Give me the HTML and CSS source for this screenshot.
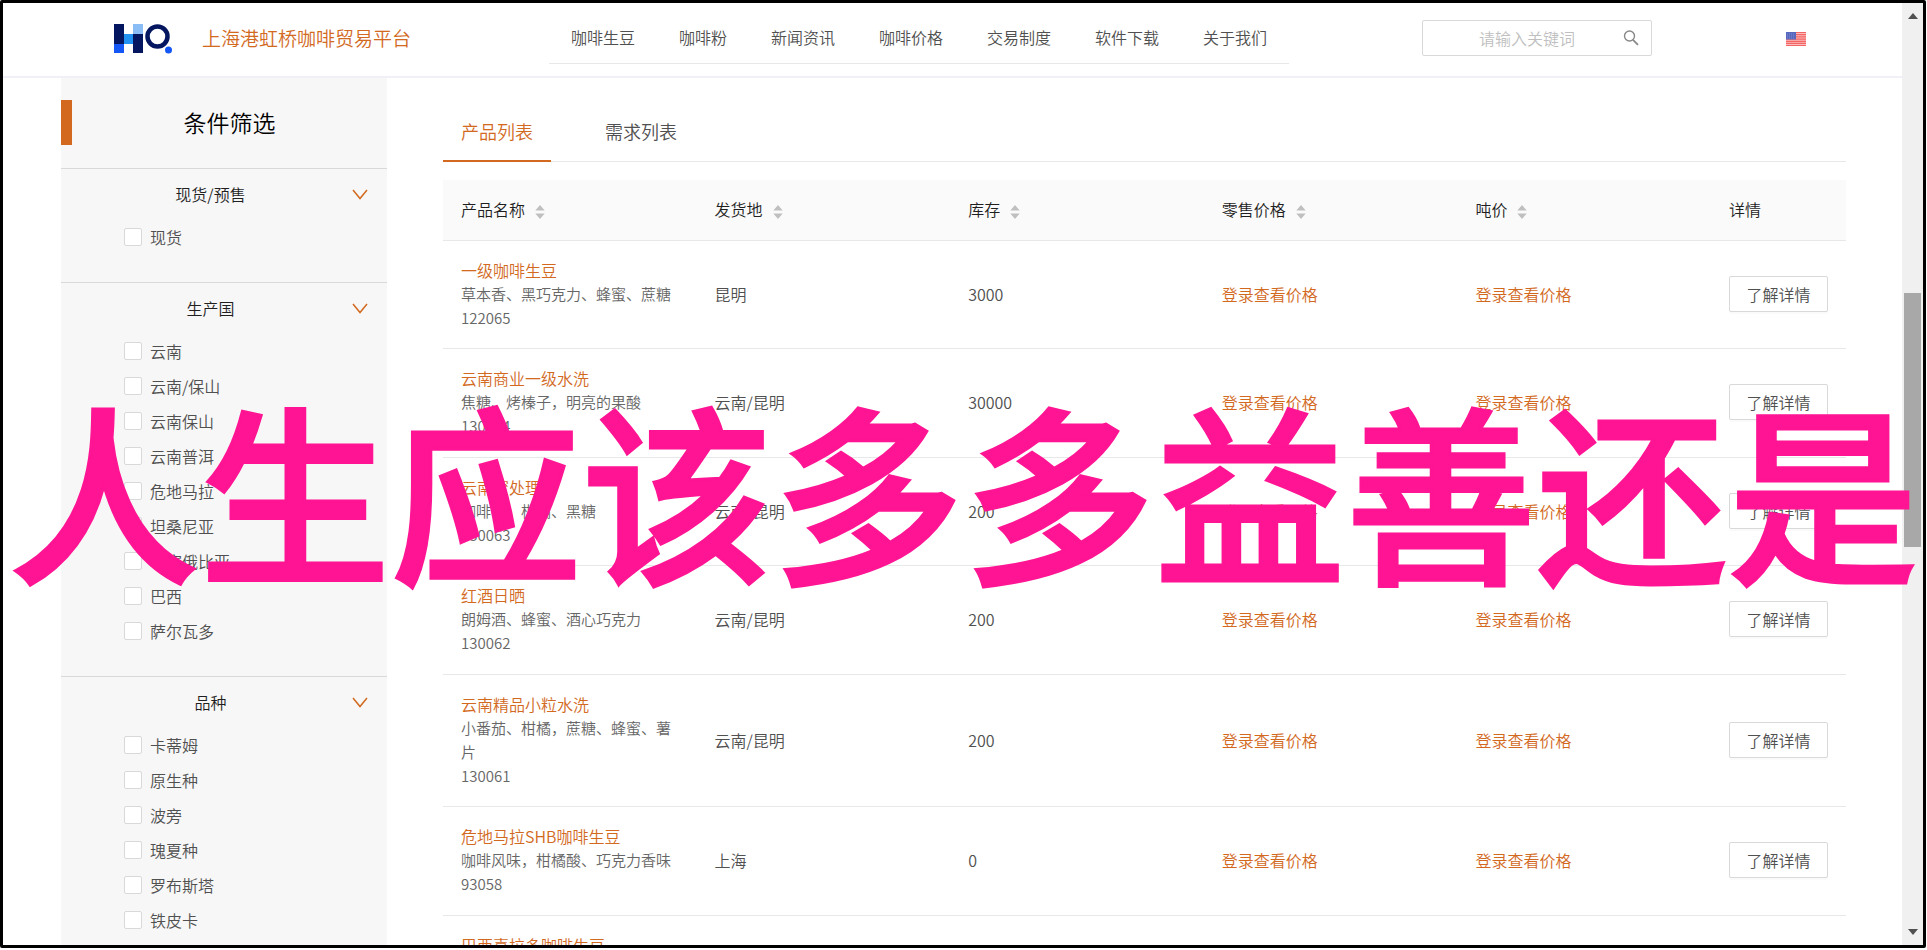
FILE: index.html
```
<!DOCTYPE html>
<html lang="zh-CN">
<head>
<meta charset="utf-8">
<title>上海港虹桥咖啡贸易平台</title>
<link rel="stylesheet" href="styles.css">
</head>
<body>
<svg class="defs" aria-hidden="true">
  <symbol id="chevron" viewBox="0 0 16 11"><path d="M1 1l7 8.5L15 1" fill="none" stroke="#d2691e" stroke-width="1.5"/></symbol>
  <symbol id="sort" viewBox="0 0 10 14"><path d="M5 0l4.700 5.500H.3zM5 14l4.700-5.500H.3z" fill="#bfbfbf"/></symbol>
</svg>
<div class="frame">
  <div class="page">
    <header class="header">
      <a class="brand" href="#">
        <svg class="logo" viewBox="0 0 58 30" aria-hidden="true">
          <path d="M0 0h10v20H0z" fill="#03165f"/><path d="M0 20h10v9H0z" fill="#1557f5"/>
          <path d="M10 10h9v10h-9z" fill="#2192f2"/><path d="M19 0h10v10H19z" fill="#8abcf5"/><path d="M19 10h10v19H19z" fill="#03165f"/>
          <circle cx="43.500" cy="12.500" r="10" fill="none" stroke="#03165f" stroke-width="4.500"/><circle cx="54.500" cy="26" r="3.500" fill="#1557f5"/>
        </svg>
        <span>上海港虹桥咖啡贸易平台</span>
      </a>
      <nav class="nav">
        <a href="#">咖啡生豆</a><a href="#">咖啡粉</a><a href="#">新闻资讯</a><a href="#">咖啡价格</a><a href="#">交易制度</a><a href="#">软件下载</a><a href="#">关于我们</a>
      </nav>
      <form class="search">
        <input type="text" placeholder="请输入关键词" aria-label="请输入关键词">
        <button type="button" aria-label="搜索"><svg viewBox="0 0 16 16"><circle cx="6.500" cy="6" r="5" fill="none" stroke="#888" stroke-width="1.400"/><path d="M10 9.800l5 5" stroke="#888" stroke-width="1.800"/></svg></button>
      </form>
      <a class="lang" href="#" aria-label="English">
        <svg viewBox="0 0 20 14"><path d="M0 0h20v14H0z" fill="#fbb"/><path d="M0 .5h20M0 2.700h20M0 4.900h20M0 7.100h20M0 9.300h20M0 11.400h20M0 13.500h20" stroke="#f26565" stroke-width="1.200"/><path d="M0 0h10v7.500H0z" fill="#5767bd"/><path d="M1 2h8M1 4h8M1 6h8" stroke="#8b97d8" stroke-width=".7" stroke-dasharray="1 1"/></svg>
      </a>
    </header>
    <div class="content">
      <aside class="sidebar">
        <h2 class="sidebar-title"><span>条件筛选</span></h2>
        <section class="group">
          <h3><span>现货/预售</span><svg><use href="#chevron"/></svg></h3>
          <label><input type="checkbox">现货</label>
        </section>
        <section class="group">
          <h3><span>生产国</span><svg><use href="#chevron"/></svg></h3>
          <label><input type="checkbox">云南</label>
          <label><input type="checkbox">云南/保山</label>
          <label><input type="checkbox">云南保山</label>
          <label><input type="checkbox">云南普洱</label>
          <label><input type="checkbox">危地马拉</label>
          <label><input type="checkbox">坦桑尼亚</label>
          <label><input type="checkbox">埃塞俄比亚</label>
          <label><input type="checkbox">巴西</label>
          <label><input type="checkbox">萨尔瓦多</label>
        </section>
        <section class="group">
          <h3><span>品种</span><svg><use href="#chevron"/></svg></h3>
          <label><input type="checkbox">卡蒂姆</label>
          <label><input type="checkbox">原生种</label>
          <label><input type="checkbox">波旁</label>
          <label><input type="checkbox">瑰夏种</label>
          <label><input type="checkbox">罗布斯塔</label>
          <label><input type="checkbox">铁皮卡</label>
        </section>
      </aside>
      <main class="main">
        <div class="tabs">
          <button type="button" class="tab active">产品列表</button>
          <button type="button" class="tab">需求列表</button>
        </div>
        <table class="products">
          <thead>
            <tr>
              <th>产品名称<svg><use href="#sort"/></svg></th>
              <th>发货地<svg><use href="#sort"/></svg></th>
              <th>库存<svg><use href="#sort"/></svg></th>
              <th>零售价格<svg><use href="#sort"/></svg></th>
              <th>吨价<svg><use href="#sort"/></svg></th>
              <th class="col-detail">详情</th>
            </tr>
          </thead>
          <tbody>
            <tr><td><a href="#">一级咖啡生豆</a><p>草本香、黑巧克力、蜂蜜、蔗糖</p><p>122065</p></td><td>昆明</td><td>3000</td><td><a href="#">登录查看价格</a></td><td><a href="#">登录查看价格</a></td><td><button type="button">了解详情</button></td></tr>
            <tr><td><a href="#">云南商业一级水洗</a><p>焦糖、烤榛子，明亮的果酸</p><p>130064</p></td><td>云南/昆明</td><td>30000</td><td><a href="#">登录查看价格</a></td><td><a href="#">登录查看价格</a></td><td><button type="button">了解详情</button></td></tr>
            <tr><td><a href="#">云南蜜处理</a><p>咖啡花、柑橘、黑糖</p><p>130063</p></td><td>云南/昆明</td><td>200</td><td><a href="#">登录查看价格</a></td><td><a href="#">登录查看价格</a></td><td><button type="button">了解详情</button></td></tr>
            <tr><td><a href="#">红酒日晒</a><p>朗姆酒、蜂蜜、酒心巧克力</p><p>130062</p></td><td>云南/昆明</td><td>200</td><td><a href="#">登录查看价格</a></td><td><a href="#">登录查看价格</a></td><td><button type="button">了解详情</button></td></tr>
            <tr><td><a href="#">云南精品小粒水洗</a><p>小番茄、柑橘，蔗糖、蜂蜜、薯片</p><p>130061</p></td><td>云南/昆明</td><td>200</td><td><a href="#">登录查看价格</a></td><td><a href="#">登录查看价格</a></td><td><button type="button">了解详情</button></td></tr>
            <tr><td><a href="#">危地马拉SHB咖啡生豆</a><p>咖啡风味，柑橘酸、巧克力香味</p><p>93058</p></td><td>上海</td><td>0</td><td><a href="#">登录查看价格</a></td><td><a href="#">登录查看价格</a></td><td><button type="button">了解详情</button></td></tr>
            <tr><td><a href="#">巴西喜拉多咖啡生豆</a></td><td></td><td></td><td></td><td></td><td></td></tr>
          </tbody>
        </table>
      </main>
    </div>
  </div>
  <div class="scrollbar" aria-hidden="true">
    <svg viewBox="0 0 10 6"><path d="M5 0l5 6H0z"/></svg>
    <div class="track"><div class="thumb"></div></div>
    <svg viewBox="0 0 10 6"><path d="M0 0h10L5 6z"/></svg>
  </div>
</div>
<div class="caption">人生应该多多益善还是</div>
</body>
</html>
```
FILE: styles.css
```
* { box-sizing: border-box; }
body {
  margin: 0;
  padding: 0 1px 2px 0;
  height: 100vh;
  overflow: hidden;
  background: #fff;
  color: #505050;
  font: 350 16px/24px "Noto Sans CJK SC", sans-serif;
}
h2, h3, p { margin: 0; font-weight: inherit; }
a { color: inherit; text-decoration: none; }
button, input { font: inherit; color: inherit; }
.defs { position: absolute; width: 0; height: 0; }

.frame {
  display: flex;
  height: 100%;
  border: 3px solid #000;
  border-radius: 2px;
  overflow: hidden;
}
.page { flex: 1; min-width: 0; overflow: hidden; }

.header {
  display: flex;
  align-items: flex-start;
  height: 75px;
  border-bottom: 2px solid #f0f1f8;
}
.brand {
  display: flex;
  align-items: center;
  gap: 30px;
  width: 546px;
  height: 72px;
  padding-left: 111px;
  color: #d2691e;
  font-size: 19px;
}
.brand span { padding-bottom: 2px; }
.logo { width: 58px; height: 30px; }
.nav { display: flex; border-bottom: 1px solid #e8e8e8; }
.nav a { padding: 22px 22px 14px; white-space: nowrap; }
.search {
  display: flex;
  align-items: center;
  width: 230px;
  height: 36px;
  margin: 17px 134px 0 auto;
  border: 1px solid #d9d9d9;
  border-radius: 2px;
}
.search input {
  flex: 1;
  min-width: 0;
  padding: 0 0 0 20px;
  border: 0;
  outline: 0;
  background: none;
  text-align: center;
}
.search input::placeholder { color: #bfbfbf; }
.search button { display: flex; padding: 0 12px; border: 0; background: none; }
.search svg { width: 16px; height: 16px; }
.lang { margin: 29px 96px 0 0; line-height: 0; }
.lang svg { width: 20px; height: 14px; }

.content { display: flex; gap: 56px; padding: 0 56px 0 58px; }
.sidebar { flex: none; width: 326px; background: #f7f7f7; }
.sidebar-title {
  display: flex;
  padding: 22px 0 23px;
  color: #000;
  font-size: 23px;
  line-height: 45px;
}
.sidebar-title span { flex: 1; border-left: 11px solid #d2691e; text-align: center; }
.group { padding-bottom: 28px; border-top: 1px solid #d9d9d9; }
.group h3 {
  display: flex;
  align-items: center;
  height: 50px;
  padding-right: 19px;
  color: #1f1f1f;
  font-size: 16px;
  text-align: center;
}
.group h3 span { flex: 1; padding-left: 8px; }
.group h3 svg { width: 16px; height: 11px; }
.group label { display: flex; align-items: center; gap: 8px; height: 35px; padding-left: 63px; }
.group input {
  appearance: none;
  width: 18px;
  height: 18px;
  margin: 0;
  border: 1px solid #d9d9d9;
  border-radius: 2px;
  background: #fff;
}

.main { flex: 1; min-width: 0; }
.tabs { display: flex; gap: 36px; height: 84px; margin-bottom: 18px; border-bottom: 1px solid #e8e8e8; }
.tab { height: 84px; padding: 24px 18px 0; border: 0; border-bottom: 2px solid transparent; background: none; font-size: 18px; }
.tab.active { border-bottom-color: #d2691e; color: #d2691e; }

.products { width: 100%; table-layout: fixed; border-collapse: separate; border-spacing: 0; }
.products th, .products td { padding: 17px 18px 19px; border-bottom: 1px solid #e8e8e8; text-align: left; }
.products tbody tr:nth-child(odd) td { padding-bottom: 18px; }
.products th { background: #fafafa; color: #1f1f1f; font-weight: inherit; }
.products th svg { width: 10px; height: 14px; margin-left: 10px; vertical-align: -3px; }
.products .col-detail { width: 135px; }
.products td p { color: #666; font-size: 15px; }
.products td a { display: block; color: #d2691e; }
.products td button {
  display: block;
  width: 100%;
  height: 36px;
  padding: 0;
  border: 1px solid #d9d9d9;
  border-radius: 2px;
  background: #fff;
  box-shadow: 0 2px 0 rgba(0, 0, 0, .02);
}

.scrollbar {
  display: flex;
  flex-direction: column;
  align-items: center;
  width: 21px;
  padding: 10px 0;
  background: #f0f0f0;
}
.scrollbar svg { width: 10px; height: 6px; fill: #505050; }
.track { flex: 1; width: 17px; padding-top: 274px; }
.thumb { height: 254px; background: #a8a8a8; }

.caption {
  position: fixed;
  inset: 24px 0 0 0;
  display: flex;
  align-items: center;
  justify-content: center;
  pointer-events: none;
  color: #ff1493;
  font-size: 191px;
  font-weight: 500;
  white-space: nowrap;
  -webkit-text-stroke: 3px #ff1493;
}
```
